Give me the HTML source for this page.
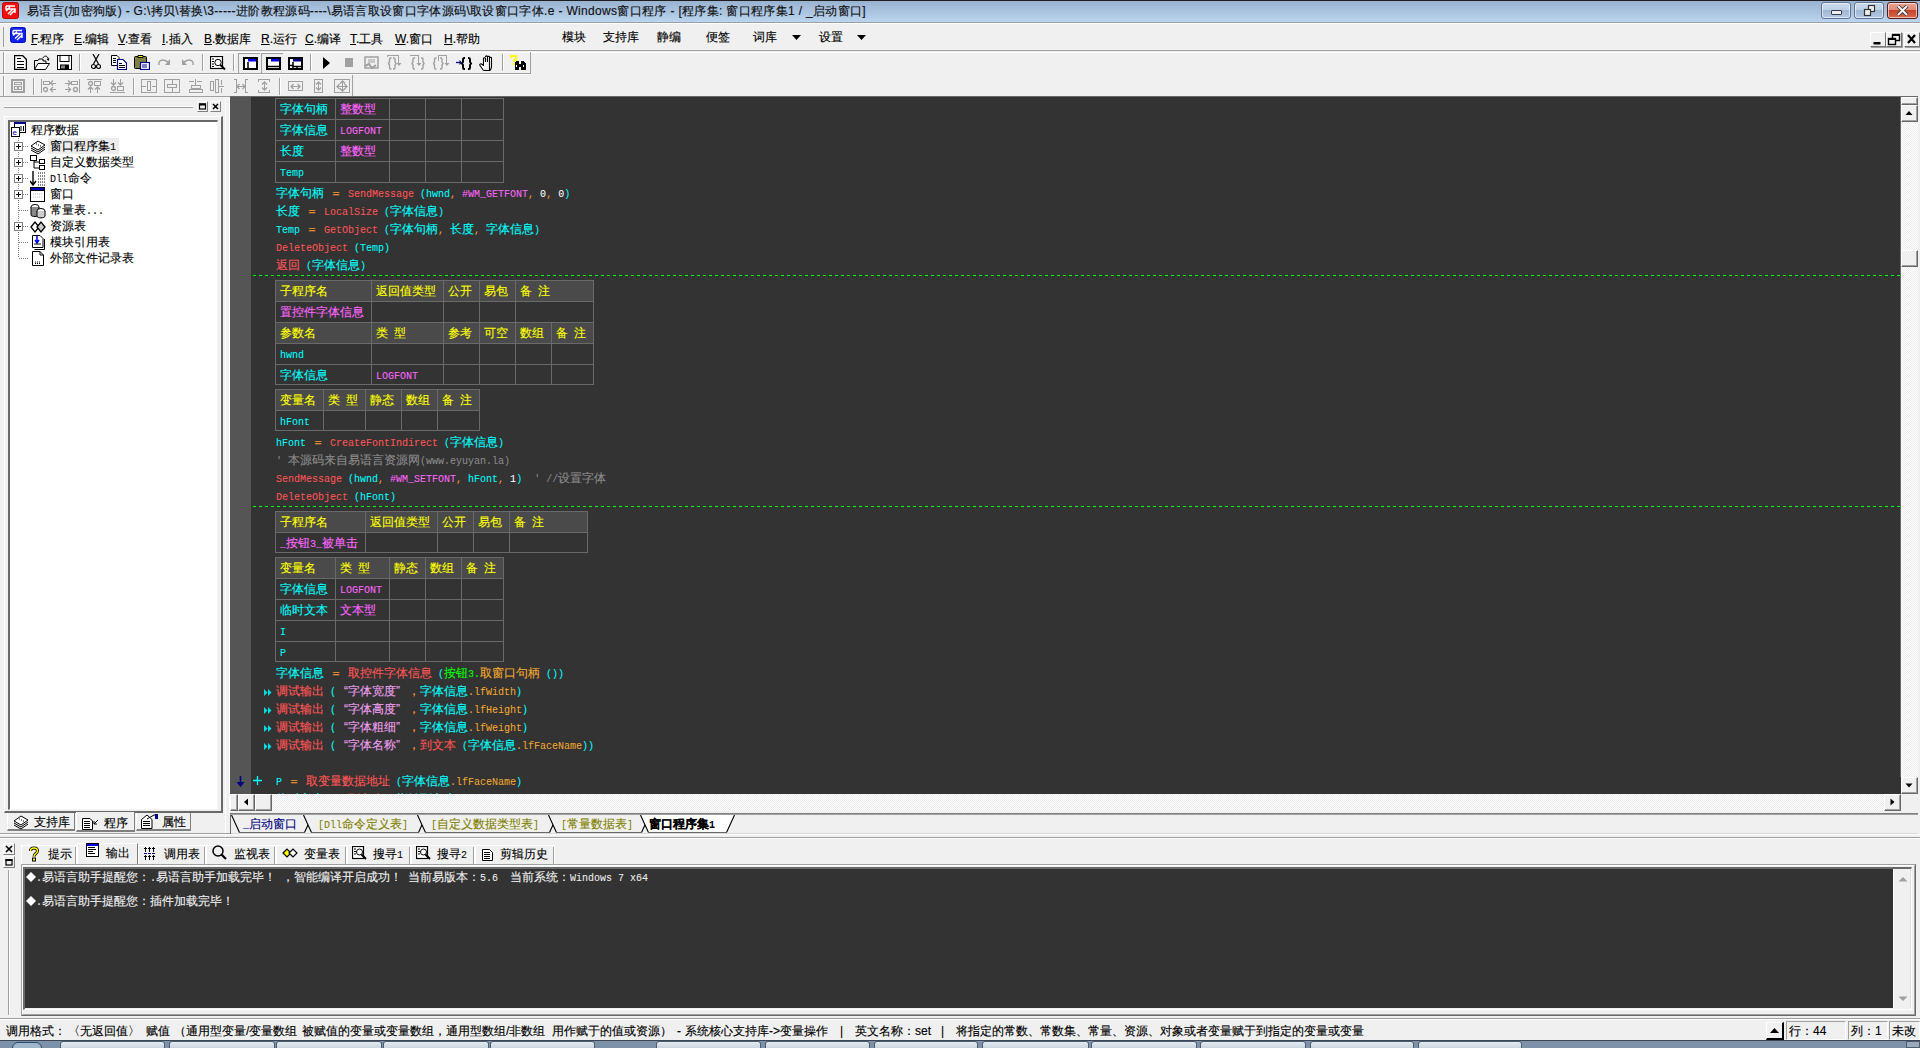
<!DOCTYPE html><html><head><meta charset="utf-8"><style>
*{margin:0;padding:0;box-sizing:border-box}
html,body{width:1920px;height:1048px;overflow:hidden;background:#f0f0f0;position:relative;font-family:"Liberation Sans",sans-serif;font-size:12px;color:#000}
div{position:absolute}
.t{position:absolute;white-space:nowrap;line-height:14px;-webkit-text-stroke:0.15px currentColor}
.cj{font-family:"Liberation Sans",sans-serif;font-size:12px;-webkit-text-stroke:0.12px currentColor}
.as{font-family:"Liberation Mono",monospace;font-size:10px;-webkit-text-stroke:0.05px currentColor}
.pw{display:inline-block;width:12px}
svg{display:block}
.code{position:absolute;white-space:nowrap;line-height:14px;height:14px}
</style></head><body><div style="position:absolute;left:0px;top:0px;width:1920px;height:22px;background:linear-gradient(#97b1cf,#bbd4ef)"></div><div style="position:absolute;left:0px;top:0px;width:1920px;height:1px;background:#1e1e1e"></div><div style="position:absolute;left:0px;top:22px;width:1920px;height:1px;background:#a0a0a0"></div><div style="position:absolute;left:0px;top:23px;width:1920px;height:1px;background:#ffffff"></div><div style="left:2px;top:2px;width:17px;height:17px"><svg width="17" height="17"><rect x="0.5" y="0.5" width="16" height="16" rx="2" fill="#f01010" stroke="#c00000"/><path d="M4 4H13M4 4V7H13V11M4 9L8 5M6 12L11 7M8 13L13 8" stroke="#fff" stroke-width="1.5" fill="none"/></svg></div><div class="t" style="left:27px;top:3px;font-size:12px;letter-spacing:0.33px;line-height:16px;color:#111">易语言(加密狗版) - G:\拷贝\替换\3-----进阶教程源码----\易语言取设窗口字体源码\取设窗口字体.e - Windows窗口程序 - [程序集: 窗口程序集1 / _启动窗口]</div><div style="position:absolute;left:1821px;top:2px;width:30px;height:17px;background:linear-gradient(#c8d9ec 0%,#bcd0e6 45%,#9fb8d4 50%,#b2c9e2 100%);border:1px solid #5f7391;border-radius:3px;box-shadow:inset 0 0 0 1px rgba(255,255,255,.6)"></div><div style="position:absolute;left:1854px;top:2px;width:30px;height:17px;background:linear-gradient(#c8d9ec 0%,#bcd0e6 45%,#9fb8d4 50%,#b2c9e2 100%);border:1px solid #5f7391;border-radius:3px;box-shadow:inset 0 0 0 1px rgba(255,255,255,.6)"></div><div style="position:absolute;left:1887px;top:2px;width:31px;height:17px;background:linear-gradient(#e9a494 0%,#de8a76 45%,#c4442a 50%,#d6694e 100%);border:1px solid #5a1a14;border-radius:3px;box-shadow:inset 0 0 0 1px rgba(255,255,255,.6)"></div><div style="left:1831px;top:10px;width:11px;height:5px;background:#eee;border:1px solid #3a3a4a;border-radius:1px"></div><div style="left:1863px;top:4px;width:14px;height:13px"><svg width="14" height="13"><rect x="5.5" y="1.5" width="6" height="6" fill="#eee" stroke="#333" stroke-width="1.2"/><rect x="1.5" y="5.5" width="6" height="6" fill="#eee" stroke="#333" stroke-width="1.2"/></svg></div><div style="left:1896px;top:5px;width:13px;height:11px"><svg width="13" height="11"><path d="M2 1L11 10M11 1L2 10" stroke="#333" stroke-width="3.6"/><path d="M2 1L11 10M11 1L2 10" stroke="#f4f4f4" stroke-width="2"/></svg></div><div style="position:absolute;left:0px;top:24px;width:1920px;height:26px;background:#f0f0f0"></div><div style="position:absolute;left:0px;top:50px;width:1920px;height:1px;background:#a0a0a0"></div><div style="position:absolute;left:1px;top:52px;width:1920px;height:1px;background:#ffffff"></div><div style="position:absolute;left:3px;top:27px;width:1px;height:20px;background:#a0a0a0"></div><div style="left:10px;top:27px;width:16px;height:16px"><svg width="16" height="16"><rect x="0.5" y="0.5" width="15" height="15" rx="2" fill="#1020f0" stroke="#0010c0"/><path d="M3 3.5H12M3 3.5V6.5H12V11M3 8.5L7 4.8M5 11.5L10 7M7 13L12 8.3" stroke="#fff" stroke-width="1.4" fill="none"/></svg></div><div class="t" style="left:31px;top:32px;font-size:12px;line-height:14px"><u>F</u>.程序</div><div class="t" style="left:74px;top:32px;font-size:12px;line-height:14px"><u>E</u>.编辑</div><div class="t" style="left:118px;top:32px;font-size:12px;line-height:14px"><u>V</u>.查看</div><div class="t" style="left:162px;top:32px;font-size:12px;line-height:14px"><u>I</u>.插入</div><div class="t" style="left:204px;top:32px;font-size:12px;line-height:14px"><u>B</u>.数据库</div><div class="t" style="left:261px;top:32px;font-size:12px;line-height:14px"><u>R</u>.运行</div><div class="t" style="left:305px;top:32px;font-size:12px;line-height:14px"><u>C</u>.编译</div><div class="t" style="left:350px;top:32px;font-size:12px;line-height:14px"><u>T</u>.工具</div><div class="t" style="left:395px;top:32px;font-size:12px;line-height:14px"><u>W</u>.窗口</div><div class="t" style="left:444px;top:32px;font-size:12px;line-height:14px"><u>H</u>.帮助</div><div class="t" style="left:562px;top:30px;font-size:12px;line-height:14px">模块</div><div class="t" style="left:603px;top:30px;font-size:12px;line-height:14px">支持库</div><div class="t" style="left:657px;top:30px;font-size:12px;line-height:14px">静编</div><div class="t" style="left:706px;top:30px;font-size:12px;line-height:14px">便签</div><div class="t" style="left:753px;top:30px;font-size:12px;line-height:14px">词库</div><div class="t" style="left:819px;top:30px;font-size:12px;line-height:14px">设置</div><div style="left:792px;top:35px;width:9px;height:5px"><svg width="9" height="5"><path d="M0 0H9L4.5 5Z" fill="#000"/></svg></div><div style="left:857px;top:35px;width:9px;height:5px"><svg width="9" height="5"><path d="M0 0H9L4.5 5Z" fill="#000"/></svg></div><div style="position:absolute;left:1870px;top:32px;width:16px;height:15px;background:#f0f0f0;border-top:1px solid #fff;border-left:1px solid #fff;border-right:1px solid #707070;border-bottom:1px solid #707070;box-shadow:1px 1px 0 #a0a0a0"><svg width="14" height="13" style="position:absolute;left:0;top:0"><rect x="2.5" y="9" width="7" height="2.5" fill="#000"/></svg></div><div style="position:absolute;left:1886px;top:32px;width:16px;height:15px;background:#f0f0f0;border-top:1px solid #fff;border-left:1px solid #fff;border-right:1px solid #707070;border-bottom:1px solid #707070;box-shadow:1px 1px 0 #a0a0a0"><svg width="14" height="13" style="position:absolute;left:0;top:0"><rect x="5.5" y="1.5" width="7" height="6" fill="none" stroke="#000" stroke-width="1.4"/><rect x="5" y="1" width="8" height="2" fill="#000"/><rect x="1.5" y="5.5" width="7" height="6" fill="#f0f0f0" stroke="#000" stroke-width="1.4"/><rect x="1" y="5" width="8" height="2" fill="#000"/></svg></div><div style="position:absolute;left:1904px;top:32px;width:16px;height:15px;background:#f0f0f0;border-top:1px solid #fff;border-left:1px solid #fff;border-right:1px solid #707070;border-bottom:1px solid #707070;box-shadow:1px 1px 0 #a0a0a0"><svg width="14" height="13" style="position:absolute;left:0;top:0"><path d="M3 2L10 10M10 2L3 10" stroke="#000" stroke-width="2.2"/></svg></div><div style="position:absolute;left:0px;top:73px;width:531px;height:1px;background:#a0a0a0"></div><div style="position:absolute;left:0px;top:74px;width:531px;height:1px;background:#ffffff"></div><div style="position:absolute;left:0px;top:96px;width:230px;height:1px;background:#a0a0a0"></div><div style="position:absolute;left:3px;top:52px;width:1px;height:21px;background:#a0a0a0"></div><div style="position:absolute;left:4px;top:52px;width:1px;height:21px;background:#fff"></div><div style="position:absolute;left:3px;top:76px;width:1px;height:20px;background:#a0a0a0"></div><div style="position:absolute;left:4px;top:76px;width:1px;height:20px;background:#fff"></div><div style="position:absolute;left:530px;top:52px;width:1px;height:21px;background:#a0a0a0"></div><div style="position:absolute;left:352px;top:75px;width:1px;height:21px;background:#a0a0a0"></div><div style="position:absolute;left:79px;top:54px;width:1px;height:17px;background:#a0a0a0"></div><div style="position:absolute;left:80px;top:54px;width:1px;height:17px;background:#fff"></div><div style="position:absolute;left:202px;top:54px;width:1px;height:17px;background:#a0a0a0"></div><div style="position:absolute;left:203px;top:54px;width:1px;height:17px;background:#fff"></div><div style="position:absolute;left:233px;top:54px;width:1px;height:17px;background:#a0a0a0"></div><div style="position:absolute;left:234px;top:54px;width:1px;height:17px;background:#fff"></div><div style="position:absolute;left:310px;top:54px;width:1px;height:17px;background:#a0a0a0"></div><div style="position:absolute;left:311px;top:54px;width:1px;height:17px;background:#fff"></div><div style="position:absolute;left:502px;top:54px;width:1px;height:17px;background:#a0a0a0"></div><div style="position:absolute;left:503px;top:54px;width:1px;height:17px;background:#fff"></div><div style="position:absolute;left:33px;top:78px;width:1px;height:17px;background:#a0a0a0"></div><div style="position:absolute;left:34px;top:78px;width:1px;height:17px;background:#fff"></div><div style="position:absolute;left:133px;top:78px;width:1px;height:17px;background:#a0a0a0"></div><div style="position:absolute;left:134px;top:78px;width:1px;height:17px;background:#fff"></div><div style="position:absolute;left:279px;top:78px;width:1px;height:17px;background:#a0a0a0"></div><div style="position:absolute;left:280px;top:78px;width:1px;height:17px;background:#fff"></div><div style="left:14px;top:55px;width:13px;height:15px"><svg width="13" height="15"><path d="M0.5 0.5H8.5L12.5 4.5V14.5H0.5Z" fill="#fff" stroke="#000" stroke-width="1.4"/><path d="M3 3.5H7M3 6.5H10M3 9.5H10M3 12.5H10" stroke="#000" shape-rendering="crispEdges"/></svg></div><div style="left:34px;top:55px;width:16px;height:15px"><svg width="16" height="15"><path d="M0.5 14.5V5.5H4L5 4H9V6H12V8" fill="none" stroke="#000"/><path d="M0.5 14.5L4 8.5H15.5L11.5 14.5Z" fill="#fff" stroke="#000"/><path d="M9 3C10 0.5 13 0.5 14 3L14.5 5" fill="none" stroke="#000"/><path d="M12.5 4L14.5 6L15.5 3.5" fill="#000"/></svg></div><div style="left:57px;top:55px;width:15px;height:15px"><svg width="15" height="15"><rect x="0.5" y="0.5" width="14" height="14" fill="#fff" stroke="#000" stroke-width="1"/><rect x="3" y="0.5" width="9" height="6" fill="#fff" stroke="#000"/><rect x="3" y="9.5" width="9" height="5" fill="#000"/><rect x="4" y="10.5" width="4" height="3" fill="#888"/></svg></div><div style="left:91px;top:54px;width:10px;height:16px"><svg width="10" height="16"><path d="M2 0L7.5 10M8 0L2.5 10" stroke="#000" stroke-width="1.2"/><circle cx="2.5" cy="12.5" r="2" fill="none" stroke="#000" stroke-width="1.2"/><circle cx="7.5" cy="12.5" r="2" fill="none" stroke="#000" stroke-width="1.2"/></svg></div><div style="left:111px;top:55px;width:16px;height:15px"><svg width="16" height="15"><path d="M0.5 0.5H6L8 2.5V10.5H0.5Z" fill="#fff" stroke="#000"/><path d="M2 3.5H5M2 5.5H5M2 7.5H5" stroke="#000" shape-rendering="crispEdges"/><path d="M6.5 4.5H12L15.5 8V14.5H6.5Z" fill="#fff" stroke="#00008b" stroke-width="1.2"/><path d="M8 8.5H11M8 10.5H14M8 12.5H14" stroke="#000" shape-rendering="crispEdges"/></svg></div><div style="left:134px;top:55px;width:16px;height:15px"><svg width="16" height="15"><rect x="0.5" y="1.5" width="12" height="12" rx="1" fill="#808040" stroke="#000"/><path d="M4 2.5H9V0.5H4Z" fill="#ff0" stroke="#000"/><rect x="6.5" y="7.5" width="9" height="7" fill="#fff" stroke="#00008b" stroke-width="1.2"/><path d="M8 10H13M8 12H13" stroke="#00008b"/></svg></div><div style="left:158px;top:59px;width:13px;height:8px"><svg width="13" height="8"><path d="M1 6C0 2 4 0 7 1.5L10 3" fill="none" stroke="#a0a0a0" stroke-width="1.4"/><path d="M12 0V6H7Z" fill="#a0a0a0"/></svg></div><div style="left:181px;top:59px;width:13px;height:8px"><svg width="13" height="8"><path d="M12 6C13 2 9 0 6 1.5L3 3" fill="none" stroke="#a0a0a0" stroke-width="1.4"/><path d="M1 0V6H6Z" fill="#a0a0a0"/></svg></div><div style="left:210px;top:56px;width:16px;height:15px"><svg width="16" height="15"><rect x="0.5" y="0.5" width="12" height="12" fill="#fff" stroke="#000" stroke-width="1.2"/><path d="M2 3H4M2 5.5H4M2 8H4M2 10.5H4" stroke="#000"/><circle cx="8" cy="6.5" r="3.2" fill="#fff" stroke="#000"/><path d="M10.5 9L15 13.5" stroke="#000" stroke-width="2"/></svg></div><div style="position:absolute;left:238px;top:53px;width:22px;height:20px;background:repeating-conic-gradient(#f6f6f6 0 25%,#e6e6e6 0 50%) 0 0/2px 2px;border-top:1px solid #a0a0a0;border-left:1px solid #a0a0a0"></div><div style="position:absolute;left:261px;top:53px;width:22px;height:20px;background:repeating-conic-gradient(#f6f6f6 0 25%,#e6e6e6 0 50%) 0 0/2px 2px;border-top:1px solid #a0a0a0;border-left:1px solid #a0a0a0"></div><div style="left:243px;top:57px;width:15px;height:13px"><svg width="15" height="13"><rect x="1" y="1" width="13" height="11" fill="#fff" stroke="#000" stroke-width="2"/><rect x="5" y="2" width="8" height="2.5" fill="#0000f0"/><rect x="2" y="2" width="2" height="2" fill="#fff"/><path d="M5 5V12" stroke="#000" stroke-width="1.5"/></svg></div><div style="left:266px;top:57px;width:15px;height:13px"><svg width="15" height="13"><rect x="1" y="1" width="13" height="11" fill="#fff" stroke="#000" stroke-width="2"/><rect x="5" y="2" width="8" height="2.5" fill="#0000f0"/><rect x="2" y="2" width="2" height="2" fill="#fff"/><path d="M1 9.5H14" stroke="#000" stroke-width="1.5"/></svg></div><div style="left:288px;top:57px;width:15px;height:13px"><svg width="15" height="13"><rect x="1" y="1" width="13" height="11" fill="#fff" stroke="#000" stroke-width="2"/><rect x="5" y="2" width="8" height="2.5" fill="#00008b"/><path d="M5 5V12M1 8.5H5M5 9.5H14M9 9.5V12" stroke="#000" stroke-width="1.5"/></svg></div><div style="left:323px;top:57px;width:7px;height:12px"><svg width="7" height="12"><path d="M0 0L7 6L0 12Z" fill="#000"/></svg></div><div style="left:345px;top:58px;width:8px;height:9px"><svg width="8" height="9"><rect width="8" height="9" fill="#a0a0a0"/></svg></div><div style="left:364px;top:56px;width:15px;height:14px"><svg width="15" height="14"><rect x="1" y="1" width="13" height="11" fill="none" stroke="#a0a0a0" stroke-width="1.5"/><path d="M4 4H11M4 6H11" stroke="#a0a0a0"/><path d="M1 10L5 8L8 12L12 9" stroke="#a0a0a0" stroke-width="2" fill="none"/></svg></div><div style="left:387px;top:55px;width:16px;height:15px"><svg width="16" height="15"><path d="M4.5 3H3.5Q2.5 3 2.5 4.5V7L1.5 8.5L2.5 10V12.5Q2.5 14 3.5 14H4.5" fill="none" stroke="#a0a0a0" stroke-width="1.4"/><path d="M6 3H7Q8 3 8 4.5V7L9 8.5L8 10V12.5Q8 14 7 14H6" fill="none" stroke="#a0a0a0" stroke-width="1.4"/><path d="M0.5 2V0.5H11.5V9" fill="none" stroke="#a0a0a0" stroke-width="1" shape-rendering="crispEdges"/><path d="M9.5 8L12 11L14.5 8Z" fill="#a0a0a0"/></svg></div><div style="left:410px;top:55px;width:16px;height:15px"><svg width="16" height="15"><path d="M5 3H4Q3 3 3 4.5V7L2 8.5L3 10V12.5Q3 14 4 14H5" fill="none" stroke="#a0a0a0" stroke-width="1.4"/><path d="M11 3H12Q13 3 13 4.5V7L14 8.5L13 10V12.5Q13 14 12 14H11" fill="none" stroke="#a0a0a0" stroke-width="1.4"/><path d="M0 0.5H8.5V9" fill="none" stroke="#a0a0a0" stroke-width="1" shape-rendering="crispEdges"/><path d="M6.5 8L9 11L11.5 8Z" fill="#a0a0a0"/></svg></div><div style="left:433px;top:55px;width:17px;height:15px"><svg width="17" height="15"><path d="M3.5 3H2.5Q1.5 3 1.5 4.5V7L0.5 8.5L1.5 10V12.5Q1.5 14 2.5 14H3.5" fill="none" stroke="#a0a0a0" stroke-width="1.4"/><path d="M7 3H8Q9 3 9 4.5V7L10 8.5L9 10V12.5Q9 14 8 14H7" fill="none" stroke="#a0a0a0" stroke-width="1.4"/><path d="M5.5 6V0.5H13.5V9" fill="none" stroke="#a0a0a0" stroke-width="1" shape-rendering="crispEdges"/><path d="M11.5 8L14 11L16.5 8Z" fill="#a0a0a0"/></svg></div><div style="left:456px;top:57px;width:17px;height:13px"><svg width="17" height="13"><path d="M0 5.5H5" stroke="#000080" stroke-width="1.3"/><path d="M3.5 3L6 5.5L3.5 8Z" fill="#000080"/><path d="M9 1H8Q7 1 7 2.5V5L6 6.5L7 8V10.5Q7 12 8 12H9" fill="none" stroke="#000" stroke-width="2"/><path d="M12 1H13Q14 1 14 2.5V5L15 6.5L14 8V10.5Q14 12 13 12H12" fill="none" stroke="#000" stroke-width="2"/></svg></div><div style="left:479px;top:55px;width:15px;height:16px"><svg width="15" height="16"><path d="M4.5 15.5L1 10.5C0.3 9.5 1.5 8.3 2.5 9L4.5 10.5V3.5C4.5 2.5 6.5 2.5 6.5 3.5V7M6.5 2C6.5 0.5 8.5 0.5 8.5 2V7M8.5 2C8.5 1 10.5 1 10.5 2V7M10.5 3C10.5 2 12.5 2 12.5 3V11C12.5 13 11.5 15.5 10.5 15.5Z" fill="#fff" stroke="#000" stroke-width="1.1" stroke-linejoin="round"/><path d="M4.5 15.5H10.5" stroke="#000" stroke-width="1.1"/></svg></div><div style="left:510px;top:55px;width:17px;height:16px"><svg width="17" height="16"><path d="M1 2.5V1H6V5H4V7" fill="none" stroke="#ff0" stroke-width="2" shape-rendering="crispEdges"/><rect x="3" y="8" width="2" height="2" fill="#ff0"/><path d="M5 15V9L6 6H9V9H11V6H14L16 9V15H11V12H9V15Z" fill="#000" shape-rendering="crispEdges"/><rect x="6" y="10" width="1" height="2" fill="#fff"/><rect x="13" y="10" width="1" height="2" fill="#fff"/></svg></div><div style="left:11px;top:79px;width:14px;height:14px"><svg width="14" height="14"><rect x="0.5" y="0.5" width="13" height="13" stroke="#a0a0a0" fill="none" stroke-width="1" shape-rendering="crispEdges"/><rect x="1.5" y="1.5" width="11" height="11" stroke="#a0a0a0" fill="none" stroke-width="1" shape-rendering="crispEdges"/><rect x="3.5" y="3.5" width="7" height="2" stroke="#a0a0a0" fill="none" stroke-width="1" shape-rendering="crispEdges"/><rect x="3.5" y="7.5" width="3" height="3" stroke="#a0a0a0" fill="none" stroke-width="1" shape-rendering="crispEdges"/><rect x="7.5" y="7.5" width="3" height="3" stroke="#a0a0a0" fill="none" stroke-width="1" shape-rendering="crispEdges"/></svg></div><div style="left:41px;top:79px;width:16px;height:15px"><svg width="16" height="15"><path d="M0.5 0V14" stroke="#a0a0a0" fill="none" stroke-width="1" shape-rendering="crispEdges"/><rect x="2.5" y="2.5" width="6" height="3" stroke="#a0a0a0" fill="none" stroke-width="1" shape-rendering="crispEdges"/><circle cx="4.5" cy="10.5" r="2" stroke="#a0a0a0" fill="none" stroke-width="1.3"/><path d="M9 4H15M9 10.5H15" stroke="#a0a0a0" fill="none" stroke-width="1" shape-rendering="crispEdges"/><path d="M12 1.5L9.5 4L12 6.5M12 8L9.5 10.5L12 13" stroke="#a0a0a0" fill="none" stroke-width="1.3"/></svg></div><div style="left:64px;top:79px;width:16px;height:15px"><svg width="16" height="15"><path d="M15.5 0V14" stroke="#a0a0a0" fill="none" stroke-width="1" shape-rendering="crispEdges"/><rect x="7.5" y="2.5" width="6" height="3" stroke="#a0a0a0" fill="none" stroke-width="1" shape-rendering="crispEdges"/><circle cx="11.5" cy="10.5" r="2" stroke="#a0a0a0" fill="none" stroke-width="1.3"/><path d="M1 4H7M1 10.5H7" stroke="#a0a0a0" fill="none" stroke-width="1" shape-rendering="crispEdges"/><path d="M4 1.5L6.5 4L4 6.5M4 8L6.5 10.5L4 13" stroke="#a0a0a0" fill="none" stroke-width="1.3"/></svg></div><div style="left:87px;top:79px;width:16px;height:15px"><svg width="16" height="15"><path d="M0 0.5H15" stroke="#a0a0a0" fill="none" stroke-width="1" shape-rendering="crispEdges"/><circle cx="3.5" cy="4.5" r="2" stroke="#a0a0a0" fill="none" stroke-width="1.3"/><rect x="7.5" y="2.5" width="6" height="4" stroke="#a0a0a0" fill="none" stroke-width="1" shape-rendering="crispEdges"/><path d="M3.5 8V14M10.5 8V14" stroke="#a0a0a0" fill="none" stroke-width="1" shape-rendering="crispEdges"/><path d="M1 10.5L3.5 8L6 10.5M8 10.5L10.5 8L13 10.5" stroke="#a0a0a0" fill="none" stroke-width="1.3"/></svg></div><div style="left:110px;top:79px;width:16px;height:15px"><svg width="16" height="15"><path d="M0 13.5H15" stroke="#a0a0a0" fill="none" stroke-width="1" shape-rendering="crispEdges"/><circle cx="3.5" cy="9.5" r="2" stroke="#a0a0a0" fill="none" stroke-width="1.3"/><rect x="7.5" y="7.5" width="6" height="4" stroke="#a0a0a0" fill="none" stroke-width="1" shape-rendering="crispEdges"/><path d="M3.5 0V6M10.5 0V6" stroke="#a0a0a0" fill="none" stroke-width="1" shape-rendering="crispEdges"/><path d="M1 3.5L3.5 6L6 3.5M8 3.5L10.5 6L13 3.5" stroke="#a0a0a0" fill="none" stroke-width="1.3"/></svg></div><div style="left:141px;top:79px;width:16px;height:15px"><svg width="16" height="15"><rect x="0.5" y="0.5" width="15" height="13" stroke="#a0a0a0" fill="none" stroke-width="1" shape-rendering="crispEdges"/><rect x="6.5" y="2.5" width="3" height="9" stroke="#a0a0a0" fill="none" stroke-width="1" shape-rendering="crispEdges"/><path d="M1 7.5H5M11 7.5H15" stroke="#a0a0a0" fill="none" stroke-width="1" shape-rendering="crispEdges"/></svg></div><div style="left:164px;top:79px;width:16px;height:15px"><svg width="16" height="15"><rect x="0.5" y="0.5" width="15" height="13" stroke="#a0a0a0" fill="none" stroke-width="1" shape-rendering="crispEdges"/><rect x="3.5" y="5.5" width="9" height="3" stroke="#a0a0a0" fill="none" stroke-width="1" shape-rendering="crispEdges"/><path d="M8.5 1V5M8.5 9V13" stroke="#a0a0a0" fill="none" stroke-width="1" shape-rendering="crispEdges"/></svg></div><div style="left:189px;top:79px;width:16px;height:15px"><svg width="16" height="15"><rect x="2.5" y="6.5" width="9" height="3" stroke="#a0a0a0" fill="none" stroke-width="1" shape-rendering="crispEdges"/><rect x="0.5" y="10.5" width="13" height="3" stroke="#a0a0a0" fill="none" stroke-width="1" shape-rendering="crispEdges"/><path d="M0 2.5H5M8 2.5H13M6.5 0V6" stroke="#a0a0a0" fill="none" stroke-width="1" shape-rendering="crispEdges"/></svg></div><div style="left:210px;top:79px;width:16px;height:15px"><svg width="16" height="15"><rect x="0.5" y="2.5" width="3" height="9" stroke="#a0a0a0" fill="none" stroke-width="1" shape-rendering="crispEdges"/><rect x="5.5" y="0.5" width="3" height="13" stroke="#a0a0a0" fill="none" stroke-width="1" shape-rendering="crispEdges"/><path d="M9 7.5H14M11.5 1V6M11.5 9V14" stroke="#a0a0a0" fill="none" stroke-width="1" shape-rendering="crispEdges"/></svg></div><div style="left:234px;top:79px;width:16px;height:15px"><svg width="16" height="15"><path d="M0 0.5H2.5V13.5H0M14 0.5H11.5V13.5H14M3 7.5H11" stroke="#a0a0a0" fill="none" stroke-width="1" shape-rendering="crispEdges"/><path d="M5.5 5L3 7.5L5.5 10M8.5 5L11 7.5L8.5 10" stroke="#a0a0a0" fill="none" stroke-width="1.3"/></svg></div><div style="left:258px;top:79px;width:13px;height:14px"><svg width="13" height="14"><path d="M0 0.5H12M0 13.5H12M0.5 0V3M11.5 0V3M0.5 11V14M11.5 11V14M6.5 3V11" stroke="#a0a0a0" fill="none" stroke-width="1" shape-rendering="crispEdges"/><path d="M4 5.5L6.5 3L9 5.5M4 8.5L6.5 11L9 8.5" stroke="#a0a0a0" fill="none" stroke-width="1.3"/></svg></div><div style="left:288px;top:79px;width:16px;height:15px"><svg width="16" height="15"><rect x="0.5" y="2.5" width="14" height="9" stroke="#a0a0a0" fill="none" stroke-width="1" shape-rendering="crispEdges"/><path d="M3 7.5H12" stroke="#a0a0a0" fill="none" stroke-width="1" shape-rendering="crispEdges"/><path d="M5.5 5L3 7.5L5.5 10M9.5 5L12 7.5L9.5 10" stroke="#a0a0a0" fill="none" stroke-width="1.3"/></svg></div><div style="left:314px;top:79px;width:10px;height:14px"><svg width="10" height="14"><rect x="0.5" y="0.5" width="8" height="13" stroke="#a0a0a0" fill="none" stroke-width="1" shape-rendering="crispEdges"/><path d="M4.5 3V11" stroke="#a0a0a0" fill="none" stroke-width="1" shape-rendering="crispEdges"/><path d="M2 5.5L4.5 3L7 5.5M2 8.5L4.5 11L7 8.5" stroke="#a0a0a0" fill="none" stroke-width="1.3"/></svg></div><div style="left:334px;top:79px;width:16px;height:15px"><svg width="16" height="15"><rect x="0.5" y="0.5" width="15" height="13" stroke="#a0a0a0" fill="none" stroke-width="1" shape-rendering="crispEdges"/><path d="M3 7.5H13M8.5 2V12" stroke="#a0a0a0" fill="none" stroke-width="1" shape-rendering="crispEdges"/><path d="M5.5 5L3 7.5L5.5 10M10.5 5L13 7.5L10.5 10M6 4.5L8.5 2L11 4.5M6 9.5L8.5 12L11 9.5" stroke="#a0a0a0" fill="none" stroke-width="1.3"/></svg></div><div style="position:absolute;left:0px;top:97px;width:230px;height:740px;background:#f0f0f0"></div><div style="position:absolute;left:4px;top:106px;width:189px;height:1px;background:#fff"></div><div style="position:absolute;left:4px;top:107px;width:189px;height:1px;background:#a0a0a0"></div><div style="position:absolute;left:197px;top:101px;width:11px;height:11px;background:#f0f0f0;border-top:1px solid #fff;border-left:1px solid #fff;border-right:1px solid #808080;border-bottom:1px solid #808080"><svg width="9" height="9" style="position:absolute;left:0;top:0"><rect x="1.5" y="2" width="6" height="5" fill="none" stroke="#000" stroke-width="1.2"/><rect x="1" y="1.5" width="7" height="2" fill="#000"/></svg></div><div style="position:absolute;left:210px;top:101px;width:11px;height:11px;background:#f0f0f0;border-top:1px solid #fff;border-left:1px solid #fff;border-right:1px solid #808080;border-bottom:1px solid #808080"><svg width="9" height="9" style="position:absolute;left:0;top:0"><path d="M2 2L7 7M7 2L2 7" stroke="#000" stroke-width="1.6"/></svg></div><div style="position:absolute;left:225px;top:97px;width:1px;height:740px;background:#fff"></div><div style="position:absolute;left:229px;top:97px;width:1px;height:716px;background:#fff"></div><div style="position:absolute;left:4px;top:116px;width:219px;height:697px;background:#f0f0f0;border-top:1px solid #fff;border-left:1px solid #fff;border-right:2px solid #696969;border-bottom:2px solid #696969"></div><div style="position:absolute;left:8px;top:120px;width:210px;height:690px;background:#fff;border-top:2px solid #696969;border-left:2px solid #696969;border-right:1px solid #f4f4f4;border-bottom:1px solid #f4f4f4"></div><div style="left:18px;top:138px;width:1px;height:120px;background:repeating-linear-gradient(#808080 0 1px,transparent 1px 2px)"></div><div style="left:19px;top:146px;width:10px;height:1px;background:repeating-linear-gradient(90deg,#808080 0 1px,transparent 1px 2px)"></div><div style="left:19px;top:162px;width:10px;height:1px;background:repeating-linear-gradient(90deg,#808080 0 1px,transparent 1px 2px)"></div><div style="left:19px;top:178px;width:10px;height:1px;background:repeating-linear-gradient(90deg,#808080 0 1px,transparent 1px 2px)"></div><div style="left:19px;top:194px;width:10px;height:1px;background:repeating-linear-gradient(90deg,#808080 0 1px,transparent 1px 2px)"></div><div style="left:19px;top:210px;width:10px;height:1px;background:repeating-linear-gradient(90deg,#808080 0 1px,transparent 1px 2px)"></div><div style="left:19px;top:226px;width:10px;height:1px;background:repeating-linear-gradient(90deg,#808080 0 1px,transparent 1px 2px)"></div><div style="left:19px;top:242px;width:10px;height:1px;background:repeating-linear-gradient(90deg,#808080 0 1px,transparent 1px 2px)"></div><div style="left:19px;top:258px;width:10px;height:1px;background:repeating-linear-gradient(90deg,#808080 0 1px,transparent 1px 2px)"></div><div style="left:14px;top:142px;width:9px;height:9px;background:#fff;border:1px solid #808080"><svg width="7" height="7" style="position:absolute;left:0;top:0"><path d="M1 3.5H6M3.5 1V6" stroke="#000" stroke-width="1"/></svg></div><div style="left:14px;top:158px;width:9px;height:9px;background:#fff;border:1px solid #808080"><svg width="7" height="7" style="position:absolute;left:0;top:0"><path d="M1 3.5H6M3.5 1V6" stroke="#000" stroke-width="1"/></svg></div><div style="left:14px;top:174px;width:9px;height:9px;background:#fff;border:1px solid #808080"><svg width="7" height="7" style="position:absolute;left:0;top:0"><path d="M1 3.5H6M3.5 1V6" stroke="#000" stroke-width="1"/></svg></div><div style="left:14px;top:190px;width:9px;height:9px;background:#fff;border:1px solid #808080"><svg width="7" height="7" style="position:absolute;left:0;top:0"><path d="M1 3.5H6M3.5 1V6" stroke="#000" stroke-width="1"/></svg></div><div style="left:14px;top:222px;width:9px;height:9px;background:#fff;border:1px solid #808080"><svg width="7" height="7" style="position:absolute;left:0;top:0"><path d="M1 3.5H6M3.5 1V6" stroke="#000" stroke-width="1"/></svg></div><div style="position:absolute;left:48px;top:138px;width:71px;height:16px;background:#ececec"></div><div class="code" style="left:31px;top:123px"><span class="cj" style="color:#000">程序数据</span></div><div class="code" style="left:50px;top:139px"><span class="cj" style="color:#000">窗口程序集</span><span class="as" style="color:#000">1</span></div><div class="code" style="left:50px;top:155px"><span class="cj" style="color:#000">自定义数据类型</span></div><div class="code" style="left:50px;top:171px"><span class="as" style="color:#000">Dll</span><span class="cj" style="color:#000">命令</span></div><div class="code" style="left:50px;top:187px"><span class="cj" style="color:#000">窗口</span></div><div class="code" style="left:50px;top:203px"><span class="cj" style="color:#000">常量表</span><span class="as" style="color:#000">...</span></div><div class="code" style="left:50px;top:219px"><span class="cj" style="color:#000">资源表</span></div><div class="code" style="left:50px;top:235px"><span class="cj" style="color:#000">模块引用表</span></div><div class="code" style="left:50px;top:251px"><span class="cj" style="color:#000">外部文件记录表</span></div><div style="left:11px;top:122px;width:16px;height:16px"><svg width="16" height="16"><rect x="3.5" y="0.5" width="11" height="10" fill="#fff" stroke="#000"/><rect x="3" y="0" width="12" height="2" fill="#00008b"/><rect x="0.5" y="5.5" width="8" height="9" fill="#fff" stroke="#000"/><text x="1.5" y="13" font-family="Liberation Sans" font-size="8" fill="#0000c0">e</text><path d="M10 4V9M12.5 4V9" stroke="#000"/></svg></div><div style="left:30px;top:139px;width:16px;height:16px"><svg width="16" height="16"><path d="M1 7L8 2L15 6L8 11Z" fill="#fff" stroke="#000"/><path d="M1 9L8 13L15 8M1 11L8 15L15 10" fill="none" stroke="#000"/><path d="M6 5H7M8 6H9M10 7H11" stroke="#000"/></svg></div><div style="left:30px;top:155px;width:16px;height:16px"><svg width="16" height="16"><rect x="0.5" y="0.5" width="6" height="5" fill="#fff" stroke="#000"/><rect x="9.5" y="4.5" width="5" height="4" fill="#fff" stroke="#000"/><rect x="9.5" y="10.5" width="5" height="4" fill="#fff" stroke="#000"/><path d="M4 6V13H9M4 7H9" fill="none" stroke="#000"/></svg></div><div style="left:30px;top:171px;width:16px;height:16px"><svg width="16" height="16"><path d="M3 0V13M0 10L3 14L6 10" stroke="#000" fill="none" stroke-width="1.4"/><path d="M8 2H15M8 5H15M8 8H15M8 11H15M8 14H15" stroke="#000" stroke-dasharray="1 1"/></svg></div><div style="left:30px;top:187px;width:16px;height:16px"><svg width="16" height="16"><rect x="0.5" y="0.5" width="14" height="14" fill="#fff" stroke="#000"/><rect x="0.5" y="0.5" width="14" height="3" fill="#0000c0" stroke="#000"/><path d="M3 7H12M3 10H12" stroke="#bbb" stroke-dasharray="1 1"/></svg></div><div style="left:30px;top:203px;width:16px;height:16px"><svg width="16" height="16"><ellipse cx="5" cy="4" rx="4" ry="2.5" fill="#fff" stroke="#000"/><path d="M1 4V12C1 14 9 14 9 12V4" fill="#888" stroke="#000"/><ellipse cx="11" cy="8" rx="4" ry="2.5" fill="#fff" stroke="#000"/><path d="M7 8V13C7 15.5 15 15.5 15 13V8" fill="#ccc" stroke="#000"/></svg></div><div style="left:30px;top:219px;width:16px;height:16px"><svg width="16" height="16"><path d="M1 8L5 3L9 8L5 13Z" fill="#fff" stroke="#000" stroke-width="1.3"/><path d="M7 8L11 3L15 8L11 13Z" fill="#ccc" stroke="#000" stroke-width="1.3"/></svg></div><div style="left:30px;top:234px;width:16px;height:16px"><svg width="16" height="16"><path d="M2.5 1.5H10L13 4.5V13.5H2.5Z" fill="#fff" stroke="#000"/><path d="M4.5 15.5H14.5V5" fill="none" stroke="#000"/><path d="M7 2V8M5 6L7 9L9 6" stroke="#0000e0" stroke-width="1.5" fill="none"/><path d="M4 10H11" stroke="#000"/></svg></div><div style="left:30px;top:250px;width:16px;height:16px"><svg width="16" height="16"><path d="M2.5 1.5H10L13.5 5V15.5H2.5Z" fill="#fff" stroke="#000"/><path d="M10 1.5V5H13.5" fill="none" stroke="#000"/><path d="M5 12H6M7 12H8M9 12H10M5 13.5H6M7 13.5H8M9 13.5H10" stroke="#000"/></svg></div><div style="position:absolute;left:7px;top:813px;width:68px;height:18px;background:#f0f0f0;border-left:1px solid #fff;border-right:1px solid #808080;border-bottom:2px solid #808080"></div><div style="left:13px;top:814px;width:16px;height:16px"><svg width="16" height="16"><path d="M1 7L8 2L15 6L8 11Z" fill="#fff" stroke="#000"/><path d="M1 9L8 13L15 8M1 11L8 15L15 10" fill="none" stroke="#000"/><path d="M6 5H7M8 6H9M10 7H11" stroke="#000"/></svg></div><div class="t" style="left:34px;top:815px;font-size:12px;line-height:14px">支持库</div><div style="position:absolute;left:76px;top:812px;width:59px;height:20px;background:#f0f0f0;border-left:1px solid #fff;border-right:1px solid #808080;border-bottom:2px solid #808080"></div><div style="left:82px;top:818px;width:16px;height:12px"><svg width="16" height="12"><path d="M0.5 0.5H8L10.5 3V11.5H0.5Z" fill="#fff" stroke="#000"/><path d="M2 3.5H8M2 5.5H8M2 7.5H8M2 9.5H8" stroke="#000" shape-rendering="crispEdges"/><path d="M16 2L12 6M12 3V6H15" stroke="#000" fill="none"/></svg></div><div class="t" style="left:104px;top:816px;font-size:12px;line-height:14px">程序</div><div style="position:absolute;left:136px;top:813px;width:55px;height:18px;background:#f0f0f0;border-left:1px solid #fff;border-right:1px solid #808080;border-bottom:2px solid #808080"></div><div style="left:141px;top:814px;width:17px;height:15px"><svg width="17" height="15"><path d="M0.5 5.5L6 1L11 5.5V14.5H0.5Z" fill="#fff" stroke="#000"/><path d="M2 7.5H9M2 9.5H9M2 11.5H9" stroke="#000" shape-rendering="crispEdges"/><path d="M6 5L13 1H16V5" fill="none" stroke="#000"/><rect x="14" y="0" width="3" height="5" fill="#00008b"/></svg></div><div class="t" style="left:162px;top:815px;font-size:12px;line-height:14px">属性</div><div style="position:absolute;left:0px;top:833px;width:230px;height:1px;background:#a0a0a0"></div><div style="position:absolute;left:0px;top:834px;width:230px;height:1px;background:#fff"></div><div style="position:absolute;left:230px;top:97px;width:1670px;height:698px;background:#333333"></div><div style="position:absolute;left:230px;top:97px;width:21px;height:698px;background:#555555"></div><div style="position:absolute;left:275px;top:98px;width:229px;height:22px;background:#333333;border:1px solid #6a6a6a"></div><div style="position:absolute;left:335px;top:98px;width:1px;height:22px;background:#6a6a6a"></div><div style="position:absolute;left:389px;top:98px;width:1px;height:22px;background:#6a6a6a"></div><div style="position:absolute;left:425px;top:98px;width:1px;height:22px;background:#6a6a6a"></div><div style="position:absolute;left:461px;top:98px;width:1px;height:22px;background:#6a6a6a"></div><div class="code" style="left:280px;top:102px"><span class="cj" style="color:#00ffff">字体句柄</span></div><div class="code" style="left:340px;top:102px"><span class="cj" style="color:#ff66ff">整数型</span></div><div style="position:absolute;left:275px;top:119px;width:229px;height:22px;background:#333333;border:1px solid #6a6a6a"></div><div style="position:absolute;left:335px;top:119px;width:1px;height:22px;background:#6a6a6a"></div><div style="position:absolute;left:389px;top:119px;width:1px;height:22px;background:#6a6a6a"></div><div style="position:absolute;left:425px;top:119px;width:1px;height:22px;background:#6a6a6a"></div><div style="position:absolute;left:461px;top:119px;width:1px;height:22px;background:#6a6a6a"></div><div class="code" style="left:280px;top:123px"><span class="cj" style="color:#00ffff">字体信息</span></div><div class="code" style="left:340px;top:123px"><span class="as" style="color:#ff66ff">LOGFONT</span></div><div style="position:absolute;left:275px;top:140px;width:229px;height:22px;background:#333333;border:1px solid #6a6a6a"></div><div style="position:absolute;left:335px;top:140px;width:1px;height:22px;background:#6a6a6a"></div><div style="position:absolute;left:389px;top:140px;width:1px;height:22px;background:#6a6a6a"></div><div style="position:absolute;left:425px;top:140px;width:1px;height:22px;background:#6a6a6a"></div><div style="position:absolute;left:461px;top:140px;width:1px;height:22px;background:#6a6a6a"></div><div class="code" style="left:280px;top:144px"><span class="cj" style="color:#00ffff">长度</span></div><div class="code" style="left:340px;top:144px"><span class="cj" style="color:#ff66ff">整数型</span></div><div style="position:absolute;left:275px;top:161px;width:229px;height:22px;background:#333333;border:1px solid #6a6a6a"></div><div style="position:absolute;left:335px;top:161px;width:1px;height:22px;background:#6a6a6a"></div><div style="position:absolute;left:389px;top:161px;width:1px;height:22px;background:#6a6a6a"></div><div style="position:absolute;left:425px;top:161px;width:1px;height:22px;background:#6a6a6a"></div><div style="position:absolute;left:461px;top:161px;width:1px;height:22px;background:#6a6a6a"></div><div class="code" style="left:280px;top:165px"><span class="as" style="color:#00ffff">Temp</span></div><div class="code" style="left:276px;top:186px"><span class="cj" style="color:#00ffff">字体句柄</span><span class="as" style="color:#ff9933">&nbsp;</span><span class="cj" style="color:#ff9933">＝</span><span class="as" style="color:#ff9933">&nbsp;</span><span class="as" style="color:#ff5555">SendMessage</span><span class="as" style="color:#00ffff">&nbsp;(hwnd</span><span class="as" style="color:#ff9933">,&nbsp;</span><span class="as" style="color:#ff66ff">#WM_GETFONT</span><span class="as" style="color:#ff9933">,&nbsp;</span><span class="as" style="color:#ffffff">0</span><span class="as" style="color:#ff9933">,&nbsp;</span><span class="as" style="color:#ffffff">0</span><span class="as" style="color:#00ffff">)</span></div><div class="code" style="left:276px;top:204px"><span class="cj" style="color:#00ffff">长度</span><span class="as" style="color:#ff9933">&nbsp;</span><span class="cj" style="color:#ff9933">＝</span><span class="as" style="color:#ff9933">&nbsp;</span><span class="as" style="color:#ff5555">LocalSize</span><span class="as" style="color:#00ffff">&nbsp;(</span><span class="cj" style="color:#00ffff">字体信息</span><span class="as" style="color:#00ffff">)</span></div><div class="code" style="left:276px;top:222px"><span class="as" style="color:#00ffff">Temp</span><span class="as" style="color:#ff9933">&nbsp;</span><span class="cj" style="color:#ff9933">＝</span><span class="as" style="color:#ff9933">&nbsp;</span><span class="as" style="color:#ff5555">GetObject</span><span class="as" style="color:#00ffff">&nbsp;(</span><span class="cj" style="color:#00ffff">字体句柄</span><span class="as" style="color:#ff9933">,&nbsp;</span><span class="cj" style="color:#00ffff">长度</span><span class="as" style="color:#ff9933">,&nbsp;</span><span class="cj" style="color:#00ffff">字体信息</span><span class="as" style="color:#00ffff">)</span></div><div class="code" style="left:276px;top:240px"><span class="as" style="color:#ff5555">DeleteObject</span><span class="as" style="color:#00ffff">&nbsp;(Temp)</span></div><div class="code" style="left:276px;top:258px"><span class="cj" style="color:#ff5555">返回</span><span class="as" style="color:#00ffff">&nbsp;(</span><span class="cj" style="color:#00ffff">字体信息</span><span class="as" style="color:#00ffff">)</span></div><div style="position:absolute;left:253px;top:275px;width:1647px;height:1px;background:repeating-linear-gradient(90deg,#00ff00 0 3px,transparent 3px 6px)"></div><div style="position:absolute;left:275px;top:280px;width:319px;height:22px;background:#4a4a4a;border:1px solid #6a6a6a"></div><div style="position:absolute;left:371px;top:280px;width:1px;height:22px;background:#6a6a6a"></div><div style="position:absolute;left:443px;top:280px;width:1px;height:22px;background:#6a6a6a"></div><div style="position:absolute;left:479px;top:280px;width:1px;height:22px;background:#6a6a6a"></div><div style="position:absolute;left:515px;top:280px;width:1px;height:22px;background:#6a6a6a"></div><div class="code" style="left:280px;top:284px"><span class="cj" style="color:#ffff00">子程序名</span></div><div class="code" style="left:376px;top:284px"><span class="cj" style="color:#ffff00">返回值类型</span></div><div class="code" style="left:448px;top:284px"><span class="cj" style="color:#ffff00">公开</span></div><div class="code" style="left:484px;top:284px"><span class="cj" style="color:#ffff00">易包</span></div><div class="code" style="left:520px;top:284px"><span class="cj" style="color:#ffff00">备</span><span class="as" style="color:#ffff00">&nbsp;</span><span class="cj" style="color:#ffff00">注</span></div><div style="position:absolute;left:275px;top:301px;width:319px;height:22px;background:#333333;border:1px solid #6a6a6a"></div><div style="position:absolute;left:371px;top:301px;width:1px;height:22px;background:#6a6a6a"></div><div style="position:absolute;left:443px;top:301px;width:1px;height:22px;background:#6a6a6a"></div><div style="position:absolute;left:479px;top:301px;width:1px;height:22px;background:#6a6a6a"></div><div style="position:absolute;left:515px;top:301px;width:1px;height:22px;background:#6a6a6a"></div><div class="code" style="left:280px;top:305px"><span class="cj" style="color:#ff66ff">置控件字体信息</span></div><div style="position:absolute;left:275px;top:322px;width:319px;height:22px;background:#4a4a4a;border:1px solid #6a6a6a"></div><div style="position:absolute;left:371px;top:322px;width:1px;height:22px;background:#6a6a6a"></div><div style="position:absolute;left:443px;top:322px;width:1px;height:22px;background:#6a6a6a"></div><div style="position:absolute;left:479px;top:322px;width:1px;height:22px;background:#6a6a6a"></div><div style="position:absolute;left:515px;top:322px;width:1px;height:22px;background:#6a6a6a"></div><div style="position:absolute;left:551px;top:322px;width:1px;height:22px;background:#6a6a6a"></div><div class="code" style="left:280px;top:326px"><span class="cj" style="color:#ffff00">参数名</span></div><div class="code" style="left:376px;top:326px"><span class="cj" style="color:#ffff00">类</span><span class="as" style="color:#ffff00">&nbsp;</span><span class="cj" style="color:#ffff00">型</span></div><div class="code" style="left:448px;top:326px"><span class="cj" style="color:#ffff00">参考</span></div><div class="code" style="left:484px;top:326px"><span class="cj" style="color:#ffff00">可空</span></div><div class="code" style="left:520px;top:326px"><span class="cj" style="color:#ffff00">数组</span></div><div class="code" style="left:556px;top:326px"><span class="cj" style="color:#ffff00">备</span><span class="as" style="color:#ffff00">&nbsp;</span><span class="cj" style="color:#ffff00">注</span></div><div style="position:absolute;left:275px;top:343px;width:319px;height:22px;background:#333333;border:1px solid #6a6a6a"></div><div style="position:absolute;left:371px;top:343px;width:1px;height:22px;background:#6a6a6a"></div><div style="position:absolute;left:443px;top:343px;width:1px;height:22px;background:#6a6a6a"></div><div style="position:absolute;left:479px;top:343px;width:1px;height:22px;background:#6a6a6a"></div><div style="position:absolute;left:515px;top:343px;width:1px;height:22px;background:#6a6a6a"></div><div style="position:absolute;left:551px;top:343px;width:1px;height:22px;background:#6a6a6a"></div><div class="code" style="left:280px;top:347px"><span class="as" style="color:#00ffff">hwnd</span></div><div style="position:absolute;left:275px;top:364px;width:319px;height:21px;background:#333333;border:1px solid #6a6a6a"></div><div style="position:absolute;left:371px;top:364px;width:1px;height:21px;background:#6a6a6a"></div><div style="position:absolute;left:443px;top:364px;width:1px;height:21px;background:#6a6a6a"></div><div style="position:absolute;left:479px;top:364px;width:1px;height:21px;background:#6a6a6a"></div><div style="position:absolute;left:515px;top:364px;width:1px;height:21px;background:#6a6a6a"></div><div style="position:absolute;left:551px;top:364px;width:1px;height:21px;background:#6a6a6a"></div><div class="code" style="left:280px;top:368px"><span class="cj" style="color:#00ffff">字体信息</span></div><div class="code" style="left:376px;top:368px"><span class="as" style="color:#ff66ff">LOGFONT</span></div><div style="position:absolute;left:275px;top:389px;width:205px;height:22px;background:#4a4a4a;border:1px solid #6a6a6a"></div><div style="position:absolute;left:323px;top:389px;width:1px;height:22px;background:#6a6a6a"></div><div style="position:absolute;left:365px;top:389px;width:1px;height:22px;background:#6a6a6a"></div><div style="position:absolute;left:401px;top:389px;width:1px;height:22px;background:#6a6a6a"></div><div style="position:absolute;left:437px;top:389px;width:1px;height:22px;background:#6a6a6a"></div><div class="code" style="left:280px;top:393px"><span class="cj" style="color:#ffff00">变量名</span></div><div class="code" style="left:328px;top:393px"><span class="cj" style="color:#ffff00">类</span><span class="as" style="color:#ffff00">&nbsp;</span><span class="cj" style="color:#ffff00">型</span></div><div class="code" style="left:370px;top:393px"><span class="cj" style="color:#ffff00">静态</span></div><div class="code" style="left:406px;top:393px"><span class="cj" style="color:#ffff00">数组</span></div><div class="code" style="left:442px;top:393px"><span class="cj" style="color:#ffff00">备</span><span class="as" style="color:#ffff00">&nbsp;</span><span class="cj" style="color:#ffff00">注</span></div><div style="position:absolute;left:275px;top:410px;width:205px;height:21px;background:#333333;border:1px solid #6a6a6a"></div><div style="position:absolute;left:323px;top:410px;width:1px;height:21px;background:#6a6a6a"></div><div style="position:absolute;left:365px;top:410px;width:1px;height:21px;background:#6a6a6a"></div><div style="position:absolute;left:401px;top:410px;width:1px;height:21px;background:#6a6a6a"></div><div style="position:absolute;left:437px;top:410px;width:1px;height:21px;background:#6a6a6a"></div><div class="code" style="left:280px;top:414px"><span class="as" style="color:#00ffff">hFont</span></div><div class="code" style="left:276px;top:435px"><span class="as" style="color:#00ffff">hFont</span><span class="as" style="color:#ff9933">&nbsp;</span><span class="cj" style="color:#ff9933">＝</span><span class="as" style="color:#ff9933">&nbsp;</span><span class="as" style="color:#ff5555">CreateFontIndirect</span><span class="as" style="color:#00ffff">&nbsp;(</span><span class="cj" style="color:#00ffff">字体信息</span><span class="as" style="color:#00ffff">)</span></div><div class="code" style="left:276px;top:453px"><span class="as" style="color:#8c8c8c">&#x27;&nbsp;</span><span class="cj" style="color:#8c8c8c">本源码来自易语言资源网</span><span class="as" style="color:#8c8c8c">(www.eyuyan.la)</span></div><div class="code" style="left:276px;top:471px"><span class="as" style="color:#ff5555">SendMessage</span><span class="as" style="color:#00ffff">&nbsp;(hwnd</span><span class="as" style="color:#ff9933">,&nbsp;</span><span class="as" style="color:#ff66ff">#WM_SETFONT</span><span class="as" style="color:#ff9933">,&nbsp;</span><span class="as" style="color:#00ffff">hFont</span><span class="as" style="color:#ff9933">,&nbsp;</span><span class="as" style="color:#ffffff">1</span><span class="as" style="color:#00ffff">)</span><span class="as" style="color:#8c8c8c">&nbsp;&nbsp;&#x27;&nbsp;//</span><span class="cj" style="color:#8c8c8c">设置字体</span></div><div class="code" style="left:276px;top:489px"><span class="as" style="color:#ff5555">DeleteObject</span><span class="as" style="color:#00ffff">&nbsp;(hFont)</span></div><div style="position:absolute;left:253px;top:506px;width:1647px;height:1px;background:repeating-linear-gradient(90deg,#00ff00 0 3px,transparent 3px 6px)"></div><div style="position:absolute;left:275px;top:511px;width:313px;height:22px;background:#4a4a4a;border:1px solid #6a6a6a"></div><div style="position:absolute;left:365px;top:511px;width:1px;height:22px;background:#6a6a6a"></div><div style="position:absolute;left:437px;top:511px;width:1px;height:22px;background:#6a6a6a"></div><div style="position:absolute;left:473px;top:511px;width:1px;height:22px;background:#6a6a6a"></div><div style="position:absolute;left:509px;top:511px;width:1px;height:22px;background:#6a6a6a"></div><div class="code" style="left:280px;top:515px"><span class="cj" style="color:#ffff00">子程序名</span></div><div class="code" style="left:370px;top:515px"><span class="cj" style="color:#ffff00">返回值类型</span></div><div class="code" style="left:442px;top:515px"><span class="cj" style="color:#ffff00">公开</span></div><div class="code" style="left:478px;top:515px"><span class="cj" style="color:#ffff00">易包</span></div><div class="code" style="left:514px;top:515px"><span class="cj" style="color:#ffff00">备</span><span class="as" style="color:#ffff00">&nbsp;</span><span class="cj" style="color:#ffff00">注</span></div><div style="position:absolute;left:275px;top:532px;width:313px;height:21px;background:#333333;border:1px solid #6a6a6a"></div><div style="position:absolute;left:365px;top:532px;width:1px;height:21px;background:#6a6a6a"></div><div style="position:absolute;left:437px;top:532px;width:1px;height:21px;background:#6a6a6a"></div><div style="position:absolute;left:473px;top:532px;width:1px;height:21px;background:#6a6a6a"></div><div style="position:absolute;left:509px;top:532px;width:1px;height:21px;background:#6a6a6a"></div><div class="code" style="left:280px;top:536px"><span class="as" style="color:#ff66ff">_</span><span class="cj" style="color:#ff66ff">按钮</span><span class="as" style="color:#ff66ff">3_</span><span class="cj" style="color:#ff66ff">被单击</span></div><div style="position:absolute;left:275px;top:557px;width:229px;height:22px;background:#4a4a4a;border:1px solid #6a6a6a"></div><div style="position:absolute;left:335px;top:557px;width:1px;height:22px;background:#6a6a6a"></div><div style="position:absolute;left:389px;top:557px;width:1px;height:22px;background:#6a6a6a"></div><div style="position:absolute;left:425px;top:557px;width:1px;height:22px;background:#6a6a6a"></div><div style="position:absolute;left:461px;top:557px;width:1px;height:22px;background:#6a6a6a"></div><div class="code" style="left:280px;top:561px"><span class="cj" style="color:#ffff00">变量名</span></div><div class="code" style="left:340px;top:561px"><span class="cj" style="color:#ffff00">类</span><span class="as" style="color:#ffff00">&nbsp;</span><span class="cj" style="color:#ffff00">型</span></div><div class="code" style="left:394px;top:561px"><span class="cj" style="color:#ffff00">静态</span></div><div class="code" style="left:430px;top:561px"><span class="cj" style="color:#ffff00">数组</span></div><div class="code" style="left:466px;top:561px"><span class="cj" style="color:#ffff00">备</span><span class="as" style="color:#ffff00">&nbsp;</span><span class="cj" style="color:#ffff00">注</span></div><div style="position:absolute;left:275px;top:578px;width:229px;height:22px;background:#333333;border:1px solid #6a6a6a"></div><div style="position:absolute;left:335px;top:578px;width:1px;height:22px;background:#6a6a6a"></div><div style="position:absolute;left:389px;top:578px;width:1px;height:22px;background:#6a6a6a"></div><div style="position:absolute;left:425px;top:578px;width:1px;height:22px;background:#6a6a6a"></div><div style="position:absolute;left:461px;top:578px;width:1px;height:22px;background:#6a6a6a"></div><div class="code" style="left:280px;top:582px"><span class="cj" style="color:#00ffff">字体信息</span></div><div class="code" style="left:340px;top:582px"><span class="as" style="color:#ff66ff">LOGFONT</span></div><div style="position:absolute;left:275px;top:599px;width:229px;height:22px;background:#333333;border:1px solid #6a6a6a"></div><div style="position:absolute;left:335px;top:599px;width:1px;height:22px;background:#6a6a6a"></div><div style="position:absolute;left:389px;top:599px;width:1px;height:22px;background:#6a6a6a"></div><div style="position:absolute;left:425px;top:599px;width:1px;height:22px;background:#6a6a6a"></div><div style="position:absolute;left:461px;top:599px;width:1px;height:22px;background:#6a6a6a"></div><div class="code" style="left:280px;top:603px"><span class="cj" style="color:#00ffff">临时文本</span></div><div class="code" style="left:340px;top:603px"><span class="cj" style="color:#ff66ff">文本型</span></div><div style="position:absolute;left:275px;top:620px;width:229px;height:22px;background:#333333;border:1px solid #6a6a6a"></div><div style="position:absolute;left:335px;top:620px;width:1px;height:22px;background:#6a6a6a"></div><div style="position:absolute;left:389px;top:620px;width:1px;height:22px;background:#6a6a6a"></div><div style="position:absolute;left:425px;top:620px;width:1px;height:22px;background:#6a6a6a"></div><div style="position:absolute;left:461px;top:620px;width:1px;height:22px;background:#6a6a6a"></div><div class="code" style="left:280px;top:624px"><span class="as" style="color:#00ffff">I</span></div><div style="position:absolute;left:275px;top:641px;width:229px;height:21px;background:#333333;border:1px solid #6a6a6a"></div><div style="position:absolute;left:335px;top:641px;width:1px;height:21px;background:#6a6a6a"></div><div style="position:absolute;left:389px;top:641px;width:1px;height:21px;background:#6a6a6a"></div><div style="position:absolute;left:425px;top:641px;width:1px;height:21px;background:#6a6a6a"></div><div style="position:absolute;left:461px;top:641px;width:1px;height:21px;background:#6a6a6a"></div><div class="code" style="left:280px;top:645px"><span class="as" style="color:#00ffff">P</span></div><div class="code" style="left:276px;top:666px"><span class="cj" style="color:#00ffff">字体信息</span><span class="as" style="color:#ff9933">&nbsp;</span><span class="cj" style="color:#ff9933">＝</span><span class="as" style="color:#ff9933">&nbsp;</span><span class="cj" style="color:#ff5555">取控件字体信息</span><span class="as" style="color:#00ffff">&nbsp;(</span><span class="cj" style="color:#00ff00">按钮</span><span class="as" style="color:#00ff00">3.</span><span class="cj" style="color:#f0a830">取窗口句柄</span><span class="as" style="color:#00ffff">&nbsp;())</span></div><div style="left:264px;top:689px;width:8px;height:7px"><svg width="8" height="7"><path d="M0 0L3.5 3.5L0 7ZM4 0L7.5 3.5L4 7Z" fill="#00e0e0"/></svg></div><div class="code" style="left:276px;top:684px"><span class="cj" style="color:#ff5555">调试输出</span><span class="cj pw" style="color:#00ffff;text-align:right">（</span><span class="cj pw" style="color:#f0a0f0;text-align:right">“</span><span class="cj" style="color:#f0a0f0">字体宽度</span><span class="cj pw" style="color:#f0a0f0;text-align:left">”</span><span class="cj pw" style="color:#ff9933;text-align:left">，</span><span class="cj" style="color:#00ffff">字体信息</span><span class="as" style="color:#f0a830">.lfWidth</span><span class="cj pw" style="color:#00ffff;text-align:left">）</span></div><div style="left:264px;top:707px;width:8px;height:7px"><svg width="8" height="7"><path d="M0 0L3.5 3.5L0 7ZM4 0L7.5 3.5L4 7Z" fill="#00e0e0"/></svg></div><div class="code" style="left:276px;top:702px"><span class="cj" style="color:#ff5555">调试输出</span><span class="cj pw" style="color:#00ffff;text-align:right">（</span><span class="cj pw" style="color:#f0a0f0;text-align:right">“</span><span class="cj" style="color:#f0a0f0">字体高度</span><span class="cj pw" style="color:#f0a0f0;text-align:left">”</span><span class="cj pw" style="color:#ff9933;text-align:left">，</span><span class="cj" style="color:#00ffff">字体信息</span><span class="as" style="color:#f0a830">.lfHeight</span><span class="cj pw" style="color:#00ffff;text-align:left">）</span></div><div style="left:264px;top:725px;width:8px;height:7px"><svg width="8" height="7"><path d="M0 0L3.5 3.5L0 7ZM4 0L7.5 3.5L4 7Z" fill="#00e0e0"/></svg></div><div class="code" style="left:276px;top:720px"><span class="cj" style="color:#ff5555">调试输出</span><span class="cj pw" style="color:#00ffff;text-align:right">（</span><span class="cj pw" style="color:#f0a0f0;text-align:right">“</span><span class="cj" style="color:#f0a0f0">字体粗细</span><span class="cj pw" style="color:#f0a0f0;text-align:left">”</span><span class="cj pw" style="color:#ff9933;text-align:left">，</span><span class="cj" style="color:#00ffff">字体信息</span><span class="as" style="color:#f0a830">.lfWeight</span><span class="cj pw" style="color:#00ffff;text-align:left">）</span></div><div style="left:264px;top:743px;width:8px;height:7px"><svg width="8" height="7"><path d="M0 0L3.5 3.5L0 7ZM4 0L7.5 3.5L4 7Z" fill="#00e0e0"/></svg></div><div class="code" style="left:276px;top:738px"><span class="cj" style="color:#ff5555">调试输出</span><span class="cj pw" style="color:#00ffff;text-align:right">（</span><span class="cj pw" style="color:#f0a0f0;text-align:right">“</span><span class="cj" style="color:#f0a0f0">字体名称</span><span class="cj pw" style="color:#f0a0f0;text-align:left">”</span><span class="cj pw" style="color:#ff9933;text-align:left">，</span><span class="cj" style="color:#ff5555">到文本</span><span class="as" style="color:#00ffff">&nbsp;(</span><span class="cj" style="color:#00ffff">字体信息</span><span class="as" style="color:#f0a830">.lfFaceName</span><span class="as" style="color:#00ffff">))</span></div><div style="left:236px;top:776px;width:9px;height:11px"><svg width="9" height="11"><path d="M4.5 0V8" stroke="#000080" stroke-width="1.6"/><path d="M0.5 6L4.5 11L8.5 6Z" fill="#000080"/></svg></div><div style="left:253px;top:776px;width:9px;height:9px"><svg width="9" height="9"><path d="M4.5 0V9M0 4.5H9" stroke="#00ffff" stroke-width="1.3"/></svg></div><div class="code" style="left:276px;top:774px"><span class="as" style="color:#00ffff">P</span><span class="as" style="color:#ff9933">&nbsp;</span><span class="cj" style="color:#ff9933">＝</span><span class="as" style="color:#ff9933">&nbsp;</span><span class="cj" style="color:#ff5555">取变量数据地址</span><span class="as" style="color:#00ffff">&nbsp;(</span><span class="cj" style="color:#00ffff">字体信息</span><span class="as" style="color:#f0a830">.lfFaceName</span><span class="as" style="color:#00ffff">)</span></div><div class="code" style="left:276px;top:792px"><span class="cj" style="color:#00ffff">临时文本</span><span class="as" style="color:#ff9933">&nbsp;</span><span class="cj" style="color:#ff9933">＝</span><span class="as" style="color:#ff9933">&nbsp;</span><span class="cj" style="color:#ff5555">到文本</span><span class="as" style="color:#00ffff">&nbsp;(</span><span class="cj" style="color:#00ffff">指针到文本</span><span class="as" style="color:#00ffff">&nbsp;(P))</span></div><div style="position:absolute;left:1901px;top:97px;width:17px;height:697px;background:repeating-conic-gradient(#ffffff 0 25%,#ececec 0 50%) 0 0/2px 2px"></div><div style="position:absolute;left:1900px;top:97px;width:1px;height:697px;background:#696969"></div><div style="position:absolute;left:1900px;top:777px;width:1px;height:17px;background:#333"></div><div style="position:absolute;left:1901px;top:97px;width:17px;height:8px;background:#f0f0f0;border-top:1px solid #fff;border-left:1px solid #fff;border-right:1px solid #696969;border-bottom:1px solid #696969;box-shadow:inset -1px -1px 0 #a0a0a0"></div><div style="position:absolute;left:1901px;top:105px;width:17px;height:17px;background:#f0f0f0;border-top:1px solid #fff;border-left:1px solid #fff;border-right:1px solid #696969;border-bottom:1px solid #696969;box-shadow:inset -1px -1px 0 #a0a0a0"><svg width="15" height="15" style="position:absolute;left:0;top:0"><path d="M3.5 9H10.5L7 5Z" fill="#000"/></svg></div><div style="position:absolute;left:1901px;top:250px;width:17px;height:17px;background:#f0f0f0;border-top:1px solid #fff;border-left:1px solid #fff;border-right:1px solid #696969;border-bottom:1px solid #696969;box-shadow:inset -1px -1px 0 #a0a0a0"></div><div style="position:absolute;left:1901px;top:777px;width:17px;height:17px;background:#f0f0f0;border-top:1px solid #fff;border-left:1px solid #fff;border-right:1px solid #696969;border-bottom:1px solid #696969;box-shadow:inset -1px -1px 0 #a0a0a0"><svg width="15" height="15" style="position:absolute;left:0;top:0"><path d="M3.5 5.5H10.5L7 9.5Z" fill="#000"/></svg></div><div style="position:absolute;left:230px;top:794px;width:1671px;height:17px;background:repeating-conic-gradient(#ffffff 0 25%,#ececec 0 50%) 0 0/2px 2px"></div><div style="position:absolute;left:230px;top:794px;width:8px;height:17px;background:#f0f0f0;border-top:1px solid #fff;border-left:1px solid #fff;border-right:1px solid #696969;border-bottom:1px solid #696969;box-shadow:inset -1px -1px 0 #a0a0a0"></div><div style="position:absolute;left:238px;top:794px;width:17px;height:17px;background:#f0f0f0;border-top:1px solid #fff;border-left:1px solid #fff;border-right:1px solid #696969;border-bottom:1px solid #696969;box-shadow:inset -1px -1px 0 #a0a0a0"><svg width="15" height="15" style="position:absolute;left:0;top:0"><path d="M9 3.5V10.5L5 7Z" fill="#000"/></svg></div><div style="position:absolute;left:255px;top:794px;width:17px;height:17px;background:#f0f0f0;border-top:1px solid #fff;border-left:1px solid #fff;border-right:1px solid #696969;border-bottom:1px solid #696969;box-shadow:inset -1px -1px 0 #a0a0a0"></div><div style="position:absolute;left:1884px;top:794px;width:17px;height:17px;background:#f0f0f0;border-top:1px solid #fff;border-left:1px solid #fff;border-right:1px solid #696969;border-bottom:1px solid #696969;box-shadow:inset -1px -1px 0 #a0a0a0"><svg width="15" height="15" style="position:absolute;left:0;top:0"><path d="M5.5 3.5V10.5L9.5 7Z" fill="#000"/></svg></div><div style="position:absolute;left:1901px;top:794px;width:17px;height:17px;background:#f0f0f0"></div><div style="position:absolute;left:230px;top:96px;width:1690px;height:1px;background:#696969"></div><div style="position:absolute;left:1918px;top:96px;width:2px;height:740px;background:#f0f0f0"></div><div style="position:absolute;left:230px;top:811px;width:1690px;height:26px;background:#f0f0f0"></div><div style="position:absolute;left:230px;top:813px;width:1688px;height:1px;background:#808080"></div><div style="position:absolute;left:230px;top:813px;width:1px;height:21px;background:#696969"></div><div style="position:absolute;left:230px;top:814px;width:1688px;height:1px;background:#a0a0a0"></div><div style="position:absolute;left:230px;top:832px;width:1px;height:1px;"></div><div style="position:absolute;left:231px;top:833px;width:1687px;height:1px;background:#d8d8d8"></div><div style="left:231px;top:815px;width:83px;height:19px"><svg width="83" height="19"><path d="M0.5 0L8.5 17.5H73.5L81.5 0Z" fill="#f0f0f0"/><path d="M8.5 17.5H73.5" stroke="#696969" stroke-width="1.2"/><path d="M0.5 0L8.5 17.5M73.5 17.5L81.5 0" stroke="#000" stroke-width="1.1"/></svg></div><div class="code" style="left:243px;top:817px;"><span class="as" style="color:#000080">_</span><span class="cj" style="color:#000080">启动窗口</span></div><div style="left:303px;top:815px;width:125px;height:19px"><svg width="125" height="19"><path d="M0.5 0L8.5 17.5H115.5L123.5 0Z" fill="#f0f0f0"/><path d="M8.5 17.5H115.5" stroke="#696969" stroke-width="1.2"/><path d="M0.5 0L8.5 17.5M115.5 17.5L123.5 0" stroke="#000" stroke-width="1.1"/></svg></div><div class="code" style="left:318px;top:817px;"><span class="as" style="color:#808000">[Dll</span><span class="cj" style="color:#808000">命令定义表</span><span class="as" style="color:#808000">]</span></div><div style="left:417px;top:815px;width:142px;height:19px"><svg width="142" height="19"><path d="M0.5 0L8.5 17.5H132.5L140.5 0Z" fill="#f0f0f0"/><path d="M8.5 17.5H132.5" stroke="#696969" stroke-width="1.2"/><path d="M0.5 0L8.5 17.5M132.5 17.5L140.5 0" stroke="#000" stroke-width="1.1"/></svg></div><div class="code" style="left:431px;top:817px;"><span class="as" style="color:#808000">[</span><span class="cj" style="color:#808000">自定义数据类型表</span><span class="as" style="color:#808000">]</span></div><div style="left:548px;top:815px;width:103px;height:19px"><svg width="103" height="19"><path d="M0.5 0L8.5 17.5H93.5L101.5 0Z" fill="#f0f0f0"/><path d="M8.5 17.5H93.5" stroke="#696969" stroke-width="1.2"/><path d="M0.5 0L8.5 17.5M93.5 17.5L101.5 0" stroke="#000" stroke-width="1.1"/></svg></div><div class="code" style="left:561px;top:817px;"><span class="as" style="color:#808000">[</span><span class="cj" style="color:#808000">常量数据表</span><span class="as" style="color:#808000">]</span></div><div style="left:640px;top:815px;width:96px;height:19px"><svg width="96" height="19"><path d="M0.5 0L8.5 17.5H86.5L94.5 0Z" fill="#ffffff"/><path d="M8.5 17.5H86.5" stroke="#696969" stroke-width="1.2"/><path d="M0.5 0L8.5 17.5M86.5 17.5L94.5 0" stroke="#000" stroke-width="1.1"/></svg></div><div class="code" style="left:649px;top:817px;font-weight:bold;"><span class="cj" style="color:#000000">窗口程序集</span><span class="as" style="color:#000000">1</span></div><div style="position:absolute;left:230px;top:834px;width:1690px;height:1px;background:#fff"></div><div style="position:absolute;left:0px;top:837px;width:1920px;height:1px;background:#a0a0a0"></div><div style="position:absolute;left:0px;top:838px;width:1920px;height:1px;background:#fff"></div><div style="position:absolute;left:3px;top:843px;width:12px;height:12px;background:#f0f0f0;border-top:1px solid #fff;border-left:1px solid #fff;border-right:1px solid #808080;border-bottom:1px solid #808080"><svg width="10" height="10" style="position:absolute;left:0;top:0"><path d="M2 2L8 8M8 2L2 8" stroke="#000" stroke-width="1.6"/></svg></div><div style="position:absolute;left:3px;top:856px;width:12px;height:12px;background:#f0f0f0;border-top:1px solid #fff;border-left:1px solid #fff;border-right:1px solid #808080;border-bottom:1px solid #808080"><svg width="10" height="10" style="position:absolute;left:0;top:0"><rect x="2" y="3" width="6" height="5" fill="none" stroke="#000" stroke-width="1.2"/><rect x="1.5" y="2" width="7" height="2" fill="#000"/></svg></div><div style="position:absolute;left:8px;top:870px;width:1px;height:145px;background:#a0a0a0"></div><div style="position:absolute;left:9px;top:870px;width:1px;height:145px;background:#fff"></div><div style="position:absolute;left:21px;top:845px;width:56px;height:20px;background:#f0f0f0;border-top:1px solid #fff;border-left:1px solid #fff"></div><div style="position:absolute;left:75px;top:847px;width:2px;height:18px;background:#a0a0a0;border-right:1px solid #fff"></div><div class="code" style="left:48px;top:847px"><span class="cj" style="color:#000">提示</span></div><div style="position:absolute;left:77px;top:843px;width:61px;height:24px;background:#f0f0f0;border-top:1px solid #fff;border-left:1px solid #fff;border-right:1px solid #808080"></div><div class="code" style="left:106px;top:846px"><span class="cj" style="color:#000">输出</span></div><div style="position:absolute;left:138px;top:845px;width:68px;height:20px;background:#f0f0f0;border-top:1px solid #fff;border-left:1px solid #fff"></div><div style="position:absolute;left:204px;top:847px;width:2px;height:18px;background:#a0a0a0;border-right:1px solid #fff"></div><div class="code" style="left:164px;top:847px"><span class="cj" style="color:#000">调用表</span></div><div style="position:absolute;left:206px;top:845px;width:70px;height:20px;background:#f0f0f0;border-top:1px solid #fff;border-left:1px solid #fff"></div><div style="position:absolute;left:274px;top:847px;width:2px;height:18px;background:#a0a0a0;border-right:1px solid #fff"></div><div class="code" style="left:234px;top:847px"><span class="cj" style="color:#000">监视表</span></div><div style="position:absolute;left:276px;top:845px;width:71px;height:20px;background:#f0f0f0;border-top:1px solid #fff;border-left:1px solid #fff"></div><div style="position:absolute;left:345px;top:847px;width:2px;height:18px;background:#a0a0a0;border-right:1px solid #fff"></div><div class="code" style="left:304px;top:847px"><span class="cj" style="color:#000">变量表</span></div><div style="position:absolute;left:347px;top:845px;width:64px;height:20px;background:#f0f0f0;border-top:1px solid #fff;border-left:1px solid #fff"></div><div style="position:absolute;left:409px;top:847px;width:2px;height:18px;background:#a0a0a0;border-right:1px solid #fff"></div><div class="code" style="left:373px;top:847px"><span class="cj" style="color:#000">搜寻</span><span class="as" style="color:#000">1</span></div><div style="position:absolute;left:411px;top:845px;width:64px;height:20px;background:#f0f0f0;border-top:1px solid #fff;border-left:1px solid #fff"></div><div style="position:absolute;left:473px;top:847px;width:2px;height:18px;background:#a0a0a0;border-right:1px solid #fff"></div><div class="code" style="left:437px;top:847px"><span class="cj" style="color:#000">搜寻</span><span class="as" style="color:#000">2</span></div><div style="position:absolute;left:475px;top:845px;width:80px;height:20px;background:#f0f0f0;border-top:1px solid #fff;border-left:1px solid #fff"></div><div style="position:absolute;left:553px;top:847px;width:2px;height:18px;background:#a0a0a0;border-right:1px solid #fff"></div><div class="code" style="left:500px;top:847px"><span class="cj" style="color:#000">剪辑历史</span></div><div style="left:28px;top:846px;width:12px;height:16px"><svg width="12" height="16"><path d="M2.5 5C2.5 1 9.5 1 9.5 5C9.5 7.5 6 7.5 6 10.5" fill="none" stroke="#000" stroke-width="3"/><path d="M2.5 5C2.5 1 9.5 1 9.5 5C9.5 7.5 6 7.5 6 10.5" fill="none" stroke="#ff0" stroke-width="1.5"/><rect x="4.5" y="12" width="3" height="3" fill="#ff0" stroke="#000"/></svg></div><div style="left:86px;top:843px;width:14px;height:15px"><svg width="14" height="15"><rect x="0.5" y="0.5" width="12" height="13" fill="#fff" stroke="#000"/><rect x="1" y="1" width="11" height="2" fill="#0000e0"/><path d="M2 4.5H9M2 6.5H10M2 8.5H7M2 10.5H9" stroke="#000" shape-rendering="crispEdges"/></svg></div><div style="left:144px;top:847px;width:12px;height:14px"><svg width="12" height="14"><path d="M1.5 0V5M0.0 1.5H3.0M1.5 8V13M0.0 9.5H3.0" stroke="#000" stroke-width="1.1" shape-rendering="crispEdges"/><path d="M0.0 6.5H3.0" stroke="#000080" stroke-width="1.2" shape-rendering="crispEdges"/><path d="M5.5 0V5M4.0 1.5H7.0M5.5 8V13M4.0 9.5H7.0" stroke="#000" stroke-width="1.1" shape-rendering="crispEdges"/><path d="M4.0 6.5H7.0" stroke="#000080" stroke-width="1.2" shape-rendering="crispEdges"/><path d="M9.5 0V5M8.0 1.5H11.0M9.5 8V13M8.0 9.5H11.0" stroke="#000" stroke-width="1.1" shape-rendering="crispEdges"/><path d="M8.0 6.5H11.0" stroke="#000080" stroke-width="1.2" shape-rendering="crispEdges"/></svg></div><div style="left:212px;top:845px;width:15px;height:15px"><svg width="15" height="15"><circle cx="6" cy="6" r="5" fill="none" stroke="#000" stroke-width="1.5"/><path d="M9.5 9.5L14 14" stroke="#000" stroke-width="2.2"/></svg></div><div style="left:282px;top:847px;width:16px;height:12px"><svg width="16" height="12"><path d="M1 6L5 2L9 6L5 10Z" fill="#ff0" stroke="#000" stroke-width="1.2"/><path d="M7 6L11 2L15 6L11 10Z" fill="#fff" stroke="#000" stroke-width="1.2"/></svg></div><div style="left:352px;top:846px;width:15px;height:15px"><svg width="15" height="15"><rect x="0.5" y="0.5" width="11" height="12" fill="#fff" stroke="#000" stroke-width="1.2"/><path d="M2 3H4M2 5.5H4M2 8H4" stroke="#000"/><circle cx="7.5" cy="6" r="3" fill="#fff" stroke="#000"/><path d="M9.5 8.5L14 13" stroke="#000" stroke-width="2"/></svg></div><div style="left:416px;top:846px;width:15px;height:15px"><svg width="15" height="15"><rect x="0.5" y="0.5" width="11" height="12" fill="#fff" stroke="#000" stroke-width="1.2"/><path d="M2 3H4M2 5.5H4M2 8H4" stroke="#000"/><circle cx="7.5" cy="6" r="3" fill="#fff" stroke="#000"/><path d="M9.5 8.5L14 13" stroke="#000" stroke-width="2"/></svg></div><div style="left:482px;top:847px;width:12px;height:15px"><svg width="12" height="15"><path d="M0.5 2.5H7.5L10.5 5.5V13.5H0.5Z" fill="#fff" stroke="#000"/><path d="M2 5.5H8M2 7.5H8M2 9.5H8M2 11.5H8" stroke="#000" shape-rendering="crispEdges"/></svg></div><div style="position:absolute;left:21px;top:864px;width:1895px;height:152px;background:#f0f0f0;border-top:1px solid #a0a0a0;border-left:1px solid #a0a0a0;border-right:1px solid #696969;border-bottom:1px solid #696969"></div><div style="position:absolute;left:22px;top:865px;width:1893px;height:150px;background:#f0f0f0;border-top:1px solid #fff;border-left:1px solid #fff;border-right:1px solid #a0a0a0;border-bottom:1px solid #a0a0a0"></div><div style="position:absolute;left:23px;top:867px;width:1889px;height:143px;background:#f0f0f0;border-top:2px solid #696969;border-left:2px solid #696969;border-right:1px solid #fff;border-bottom:1px solid #fff"></div><div style="position:absolute;left:25px;top:869px;width:1868px;height:139px;background:#333333"></div><div style="left:26px;top:872px;width:10px;height:10px"><svg width="10" height="10"><path d="M5 0L10 5L5 10L0 5Z" fill="#fff"/></svg></div><div style="left:26px;top:896px;width:10px;height:10px"><svg width="10" height="10"><path d="M5 0L10 5L5 10L0 5Z" fill="#fff"/></svg></div><div class="code" style="left:36px;top:870px"><span class="as" style="color:#f0f0f0">.</span><span class="cj" style="color:#f0f0f0">易语言助手提醒您</span><span class="cj pw" style="color:#f0f0f0;text-align:left">：</span><span class="as" style="color:#f0f0f0">.</span><span class="cj" style="color:#f0f0f0">易语言助手加载完毕</span><span class="cj pw" style="color:#f0f0f0;text-align:left">！</span><span class="as" style="color:#f0f0f0">&nbsp;</span><span class="cj pw" style="color:#f0f0f0;text-align:left">，</span><span class="cj" style="color:#f0f0f0">智能编译开启成功</span><span class="cj pw" style="color:#f0f0f0;text-align:left">！</span><span class="as" style="color:#f0f0f0">&nbsp;</span><span class="cj" style="color:#f0f0f0">当前易版本</span><span class="cj pw" style="color:#f0f0f0;text-align:left">：</span><span class="as" style="color:#f0f0f0">5.6&nbsp;&nbsp;</span><span class="cj" style="color:#f0f0f0">当前系统</span><span class="cj pw" style="color:#f0f0f0;text-align:left">：</span><span class="as" style="color:#f0f0f0">Windows&nbsp;7&nbsp;x64</span></div><div class="code" style="left:36px;top:894px"><span class="as" style="color:#f0f0f0">.</span><span class="cj" style="color:#f0f0f0">易语言助手提醒您</span><span class="cj pw" style="color:#f0f0f0;text-align:left">：</span><span class="cj" style="color:#f0f0f0">插件加载完毕</span><span class="cj pw" style="color:#f0f0f0;text-align:left">！</span></div><div style="position:absolute;left:1893px;top:869px;width:18px;height:139px;background:#f0f0f0;border-left:1px solid #fff;border-right:1px solid #e0e0e0"></div><div style="left:1898px;top:876px;width:10px;height:6px"><svg width="10" height="6"><path d="M0.5 5.5H9.5L5 1Z" fill="#a0a0a0"/></svg></div><div style="left:1898px;top:996px;width:10px;height:6px"><svg width="10" height="6"><path d="M0.5 0.5H9.5L5 5Z" fill="#a0a0a0"/></svg></div><div style="position:absolute;left:0px;top:1016px;width:1920px;height:24px;background:#f0f0f0"></div><div style="position:absolute;left:0px;top:1018px;width:1920px;height:1px;background:#a0a0a0"></div><div style="position:absolute;left:0px;top:1019px;width:1920px;height:1px;background:#fff"></div><div class="t" style="left:6px;top:1024px;font-size:12px;line-height:14px">调用格式：</div><div class="t" style="left:68px;top:1024px;font-size:12px;line-height:14px">〈无返回值〉</div><div class="t" style="left:146px;top:1024px;font-size:12px;line-height:14px">赋值</div><div class="t" style="left:174px;top:1024px;font-size:12px;line-height:14px">（通用型变量/变量数组</div><div class="t" style="left:302px;top:1024px;font-size:12px;line-height:14px">被赋值的变量或变量数组，</div><div class="t" style="left:446px;top:1024px;font-size:12px;line-height:14px">通用型数组/非数组</div><div class="t" style="left:552px;top:1024px;font-size:12px;line-height:14px">用作赋于的值或资源）</div><div class="t" style="left:677px;top:1024px;font-size:12px;line-height:14px">-</div><div class="t" style="left:685px;top:1024px;font-size:12px;line-height:14px">系统核心支持库->变量操作</div><div class="t" style="left:840px;top:1024px;font-size:12px;line-height:14px">|</div><div class="t" style="left:855px;top:1024px;font-size:12px;line-height:14px">英文名称：set</div><div class="t" style="left:941px;top:1024px;font-size:12px;line-height:14px">|</div><div class="t" style="left:956px;top:1024px;font-size:12px;line-height:14px">将指定的常数、常数集、常量、资源、对象或者变量赋于到指定的变量或变量</div><div style="position:absolute;left:1766px;top:1022px;width:18px;height:18px;background:#f0f0f0;border-top:1px solid #fff;border-left:1px solid #fff;border-right:2px solid #000;border-bottom:2px solid #000"><svg width="15" height="15" style="position:absolute;left:0;top:0"><path d="M3 10H12L7.5 5Z" fill="#000"/></svg></div><div style="position:absolute;left:1786px;top:1021px;width:60px;height:19px;border-top:1px solid #a0a0a0;border-left:1px solid #a0a0a0;border-right:1px solid #fff;border-bottom:1px solid #fff"></div><div class="t" style="left:1789px;top:1024px;font-size:12px;line-height:14px">行：44</div><div style="position:absolute;left:1848px;top:1021px;width:40px;height:19px;border-top:1px solid #a0a0a0;border-left:1px solid #a0a0a0;border-right:1px solid #fff;border-bottom:1px solid #fff"></div><div class="t" style="left:1851px;top:1024px;font-size:12px;line-height:14px">列：1</div><div style="position:absolute;left:1889px;top:1021px;width:31px;height:19px;border-top:1px solid #a0a0a0;border-left:1px solid #a0a0a0;border-right:1px solid #fff;border-bottom:1px solid #fff"></div><div class="t" style="left:1892px;top:1024px;font-size:12px;line-height:14px">未改</div><div style="position:absolute;left:0px;top:1040px;width:1920px;height:8px;background:#7d91a9"></div><div style="position:absolute;left:0px;top:1040px;width:1920px;height:1px;background:#3b4656"></div><div style="left:12px;top:1042px;width:30px;height:12px;border-radius:15px;border:1px solid #2a4a6a;background:#9fb6cc"></div><div style="left:60px;top:1041px;width:105px;height:10px;border-radius:3px;border:1px solid #4d5d70;background:linear-gradient(#e4eaf0,#c3ceda)"></div><div style="left:169px;top:1041px;width:106px;height:10px;border-radius:3px;border:1px solid #4d5d70;background:linear-gradient(#e4eaf0,#c3ceda)"></div><div style="left:276px;top:1041px;width:106px;height:10px;border-radius:3px;border:1px solid #4d5d70;background:linear-gradient(#e4eaf0,#c3ceda)"></div><div style="left:383px;top:1041px;width:106px;height:10px;border-radius:3px;border:1px solid #4d5d70;background:linear-gradient(#e4eaf0,#c3ceda)"></div><div style="left:490px;top:1041px;width:105px;height:10px;border-radius:3px;border:1px solid #4d5d70;background:linear-gradient(#e4eaf0,#c3ceda)"></div><div style="left:656px;top:1041px;width:105px;height:10px;border-radius:3px;border:1px solid #4d5d70;background:linear-gradient(#e4eaf0,#c3ceda)"></div><div style="left:765px;top:1041px;width:105px;height:10px;border-radius:3px;border:1px solid #4d5d70;background:linear-gradient(#e4eaf0,#c3ceda)"></div><div style="left:874px;top:1041px;width:104px;height:10px;border-radius:3px;border:1px solid #4d5d70;background:linear-gradient(#e4eaf0,#c3ceda)"></div><div style="left:982px;top:1041px;width:107px;height:10px;border-radius:3px;border:1px solid #4d5d70;background:linear-gradient(#e4eaf0,#c3ceda)"></div><div style="left:1091px;top:1041px;width:106px;height:10px;border-radius:3px;border:1px solid #4d5d70;background:linear-gradient(#e4eaf0,#c3ceda)"></div><div style="left:1200px;top:1041px;width:106px;height:10px;border-radius:3px;border:1px solid #4d5d70;background:linear-gradient(#e4eaf0,#c3ceda)"></div><div style="left:1310px;top:1041px;width:104px;height:10px;border-radius:3px;border:1px solid #4d5d70;background:linear-gradient(#e4eaf0,#c3ceda)"></div><div style="left:1418px;top:1041px;width:104px;height:10px;border-radius:3px;border:1px solid #4d5d70;background:linear-gradient(#e4eaf0,#c3ceda)"></div><div style="position:absolute;left:1906px;top:1041px;width:14px;height:7px;background:#9aaabb;border:1px solid #4d5d70"></div></body></html>
